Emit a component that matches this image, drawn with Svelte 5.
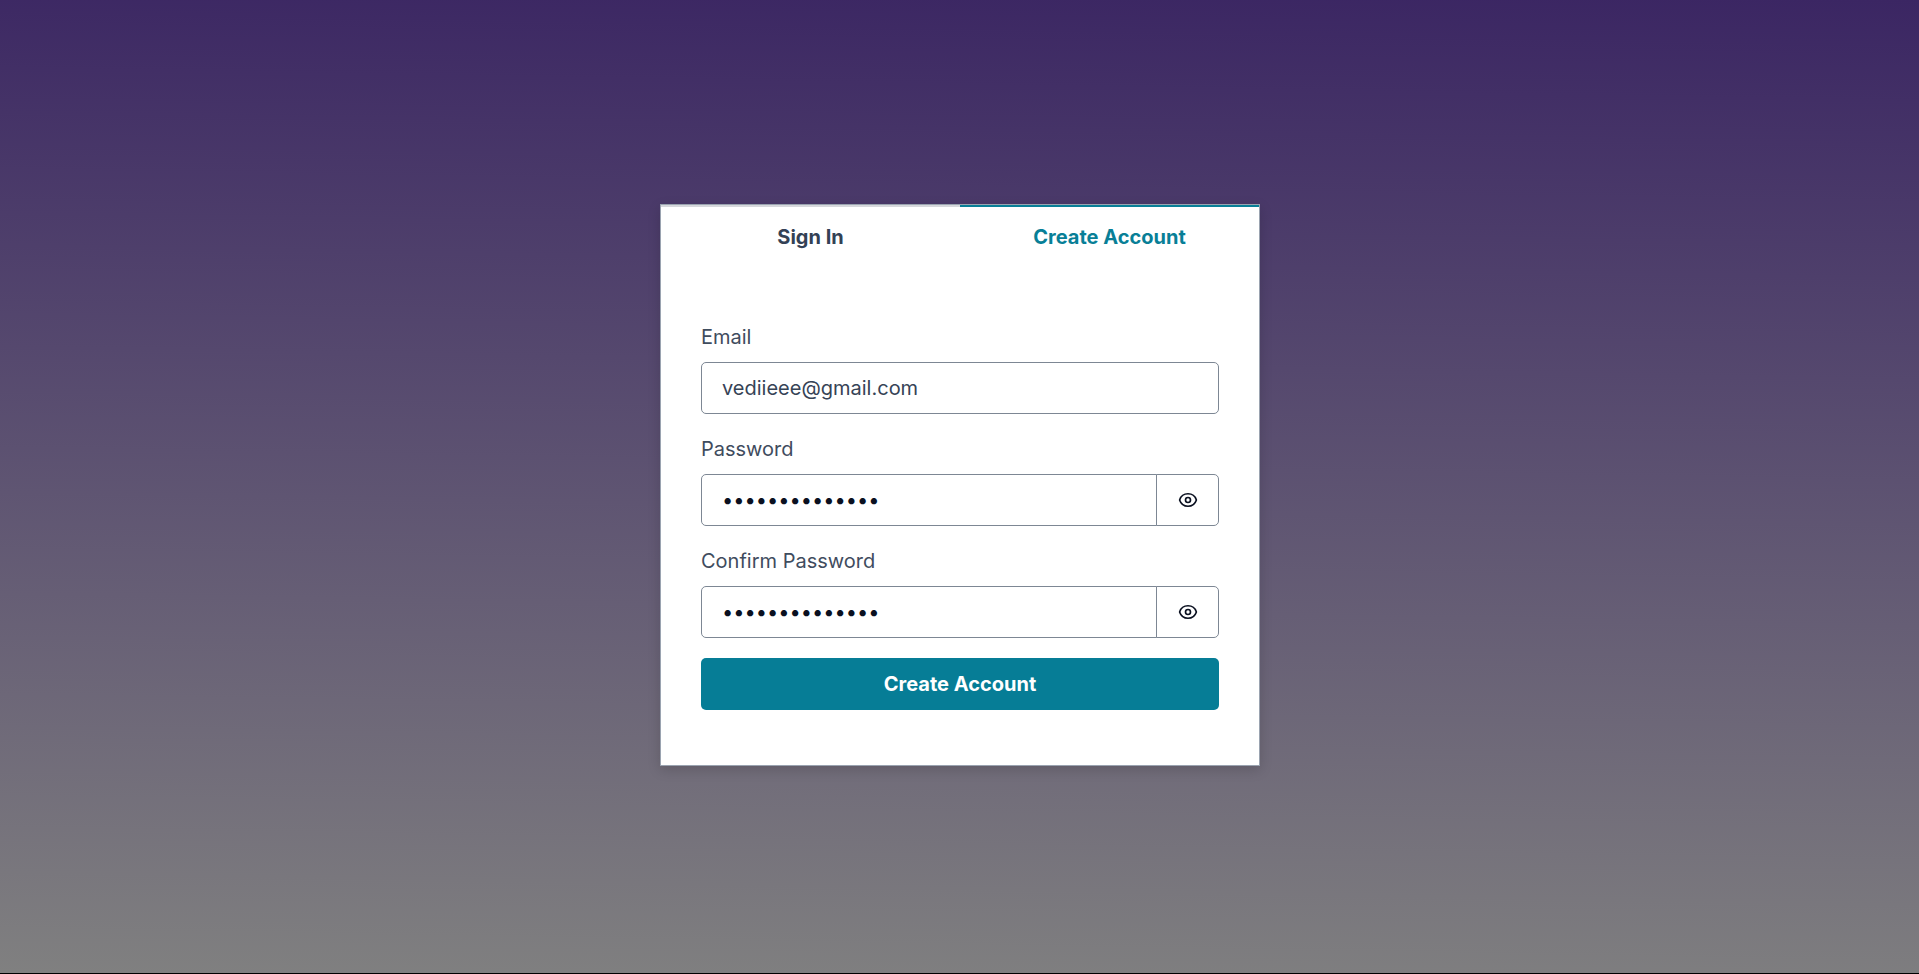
<script lang="ts">
  let tab = $state('create')
  let email = $state('vediiieee@gmail.com'.replace('iii', 'ii'))
  let password = $state('secretpassword')
  let confirm = $state('secretpassword')
</script>

{#snippet eye()}
  <svg viewBox="0 0 24 24" width="20" height="20" fill="none" stroke="currentColor" stroke-width="2" stroke-linecap="round" stroke-linejoin="round">
    <path d="M2.04 12.32a1 1 0 0 1 0-.64C3.42 7.51 7.36 4.5 12 4.5s8.57 3 9.96 7.18c.07.2.07.43 0 .64C20.58 16.49 16.64 19.5 12 19.5s-8.57-3-9.96-7.18z" />
    <circle cx="12" cy="12" r="3" />
  </svg>
{/snippet}

<main class="page">
  <section class="card">
    <div class="tabs">
      <button class="tab" class:active={tab === 'signin'} onclick={() => (tab = 'signin')}>Sign In</button>
      <button class="tab" class:active={tab === 'create'} onclick={() => (tab = 'create')}>Create Account</button>
    </div>

    <form class="form" onsubmit={(e) => e.preventDefault()}>
      <div class="field">
        <label for="email">Email</label>
        <input id="email" type="text" bind:value={email} />
      </div>

      <div class="field">
        <label for="password">Password</label>
        <div class="group">
          <input id="password" class="secret" type="password" bind:value={password} />
          <button type="button" class="reveal" aria-label="Show password">{@render eye()}</button>
        </div>
      </div>

      <div class="field">
        <label for="confirm">Confirm Password</label>
        <div class="group">
          <input id="confirm" class="secret" type="password" bind:value={confirm} />
          <button type="button" class="reveal" aria-label="Show password">{@render eye()}</button>
        </div>
      </div>

      <button class="submit" type="submit">Create Account</button>
    </form>
  </section>
</main>

<style>
  :global(body) {
    margin: 0;
    background: #000;
    font-family: Inter, 'Noto Sans', sans-serif;
  }

  .page {
    height: 973px;
    box-sizing: border-box;
    padding: 0 0 3px 1px;
    display: flex;
    align-items: center;
    justify-content: center;
    background: linear-gradient(181deg, #3b2663, #808080);
  }

  .card {
    width: 600px;
    box-sizing: border-box;
    background: #fff;
    border: 1px solid #9aa3b0;
    box-shadow: 0 4px 12px rgba(0, 0, 0, 0.15);
  }

  .tabs {
    display: flex;
  }

  .tab {
    flex: 1;
    height: 64px;
    padding: 0 0 2px;
    background: #fff;
    border: 0;
    border-top: 2px solid #d6d8dc;
    font: 700 20px Inter, sans-serif;
    color: #334155;
    cursor: pointer;
  }

  .tab.active {
    border-top-color: #087f97;
    color: #087f97;
  }

  .form {
    display: flex;
    flex-direction: column;
    gap: 20px;
    padding: 53px 40px 55px;
  }

  .field {
    display: flex;
    flex-direction: column;
    gap: 10px;
  }

  label {
    font-size: 20px;
    line-height: 30px;
    color: #3f4c5e;
  }

  input {
    flex: none;
    width: 100%;
    height: 52px;
    box-sizing: border-box;
    padding: 0 20px;
    border: 1px solid #7d8794;
    border-radius: 5px;
    font: 400 20px Inter, sans-serif;
    color: #364356;
    background: #fff;
    outline: none;
  }

  .secret {
    flex: 1;
    width: auto;
    min-width: 0;
    color: #0a1020;
    border-radius: 5px 0 0 5px;
  }

  .group {
    display: flex;
  }

  .reveal {
    width: 63px;
    height: 52px;
    margin-left: -1px;
    display: flex;
    align-items: center;
    justify-content: center;
    background: #fff;
    border: 1px solid #7d8794;
    border-radius: 0 5px 5px 0;
    color: #0a1020;
    cursor: pointer;
  }

  .submit {
    height: 52px;
    border: 0;
    border-radius: 5px;
    background: #067d96;
    color: #fff;
    font: 700 20px Inter, sans-serif;
    cursor: pointer;
  }
</style>
